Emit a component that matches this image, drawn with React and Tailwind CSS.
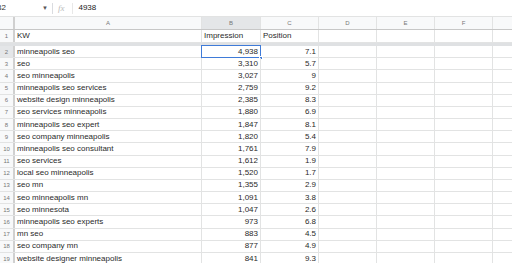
import React from "react";

const rows = [
  ["minneapolis seo", "4,938", "7.1"],
  ["seo", "3,310", "5.7"],
  ["seo minneapolis", "3,027", "9"],
  ["minneapolis seo services", "2,759", "9.2"],
  ["website design minneapolis", "2,385", "8.3"],
  ["seo services minneapolis", "1,880", "6.9"],
  ["minneapolis seo expert", "1,847", "8.1"],
  ["seo company minneapolis", "1,820", "5.4"],
  ["minneapolis seo consultant", "1,761", "7.9"],
  ["seo services", "1,612", "1.9"],
  ["local seo minneapolis", "1,520", "1.7"],
  ["seo mn", "1,355", "2.9"],
  ["seo minneapolis mn", "1,091", "3.8"],
  ["seo minnesota", "1,047", "2.6"],
  ["minneapolis seo experts", "973", "6.8"],
  ["mn seo", "883", "4.5"],
  ["seo company mn", "877", "4.9"],
  ["website designer minneapolis", "841", "9.3"],
];

function Cell({ w, children, className = "" }) {
  return (
    <div
      className={`shrink-0 h-full border-r border-[#e2e3e3] flex items-center overflow-hidden whitespace-nowrap ${w} ${className}`}
    >
      {children}
    </div>
  );
}

export default function App() {
  return (
    <div
      className="w-[512px] h-[263px] overflow-hidden bg-white text-[#2a2a2a] text-[8px] leading-none"
      style={{ fontFamily: '"Liberation Sans", Arial, sans-serif' }}
    >
      {/* formula bar */}
      <div className="h-[17px] flex items-center border-b border-[#e2e3e3] bg-white">
        <div className="w-[6px] overflow-hidden flex justify-end text-[8px] text-[#333]">
          <span>B2</span>
        </div>
        <div className="w-[36px]" />
        <span className="text-[6px] text-[#555]">▼</span>
        <div className="ml-[4px] w-px h-[11px] bg-[#dadce0]" />
        <span className="ml-[5px] text-[9px] italic text-[#bbb]" style={{ fontFamily: '"Liberation Serif", serif' }}>
          fx
        </span>
        <div className="ml-[8px] w-px h-[11px] bg-[#e8e8e8]" />
        <span className="ml-[5px] text-[8px] text-[#222]">4938</span>
      </div>
      {/* column header */}
      <div className="h-[13px] flex bg-[#f8f9fa] border-b border-[#c7c7c7] text-[6px] text-[#777]">
        <Cell w="w-[15px]" className="border-r-[2px] border-r-[#d0d0d0]" />
        <Cell w="w-[187px]" className="justify-center">A</Cell>
        <Cell w="w-[59px]" className="justify-center bg-[#e4e6e8]">B</Cell>
        <Cell w="w-[58px]" className="justify-center">C</Cell>
        <Cell w="w-[58px]" className="justify-center">D</Cell>
        <Cell w="w-[58px]" className="justify-center">E</Cell>
        <Cell w="w-[58px]" className="justify-center">F</Cell>
        <Cell w="w-[40px]" />
      </div>
      {/* row 1 */}
      <div className="h-[13px] flex border-b border-[#e2e3e3]">
        <Cell w="w-[15px]" className="justify-center bg-[#f8f9fa] text-[6px] text-[#777] border-r-[2px] border-r-[#d0d0d0]">1</Cell>
        <Cell w="w-[187px]" className="pl-[2px]">KW</Cell>
        <Cell w="w-[59px]" className="pl-[2px]">Impression</Cell>
        <Cell w="w-[58px]" className="pl-[2px]">Position</Cell>
        <Cell w="w-[58px]" />
        <Cell w="w-[58px]" />
        <Cell w="w-[58px]" />
        <Cell w="w-[40px]" />
      </div>
      <div className="h-[3px] bg-[#dfe1e3]" />
      {rows.map((r, i) => (
        <div key={i} className="h-[12.18px] flex border-b border-[#e2e3e3]">
          <Cell
            w="w-[15px]"
            className={`justify-center text-[6px] text-[#777] border-r-[2px] border-r-[#d0d0d0] ${i === 0 ? "bg-[#e4e6e8]" : "bg-[#f8f9fa]"}`}
          >
            {i + 2}
          </Cell>
          <Cell w="w-[187px]" className="pl-[2px]">{r[0]}</Cell>
          <div className="relative shrink-0 w-[59px] h-full border-r border-[#e2e3e3] flex items-center justify-end pr-[2px]">
            {r[1]}
            {i === 0 && (
              <>
                <div className="absolute inset-[-1px] border border-[#3f7bd8]" />
                <div className="absolute right-[-3px] bottom-[-3px] w-[4px] h-[4px] bg-[#3f7bd8] border border-white" />
              </>
            )}
          </div>
          <Cell w="w-[58px]" className="justify-end pr-[2px]">{r[2]}</Cell>
          <Cell w="w-[58px]" />
          <Cell w="w-[58px]" />
          <Cell w="w-[58px]" />
          <Cell w="w-[40px]" />
        </div>
      ))}
    </div>
  );
}
